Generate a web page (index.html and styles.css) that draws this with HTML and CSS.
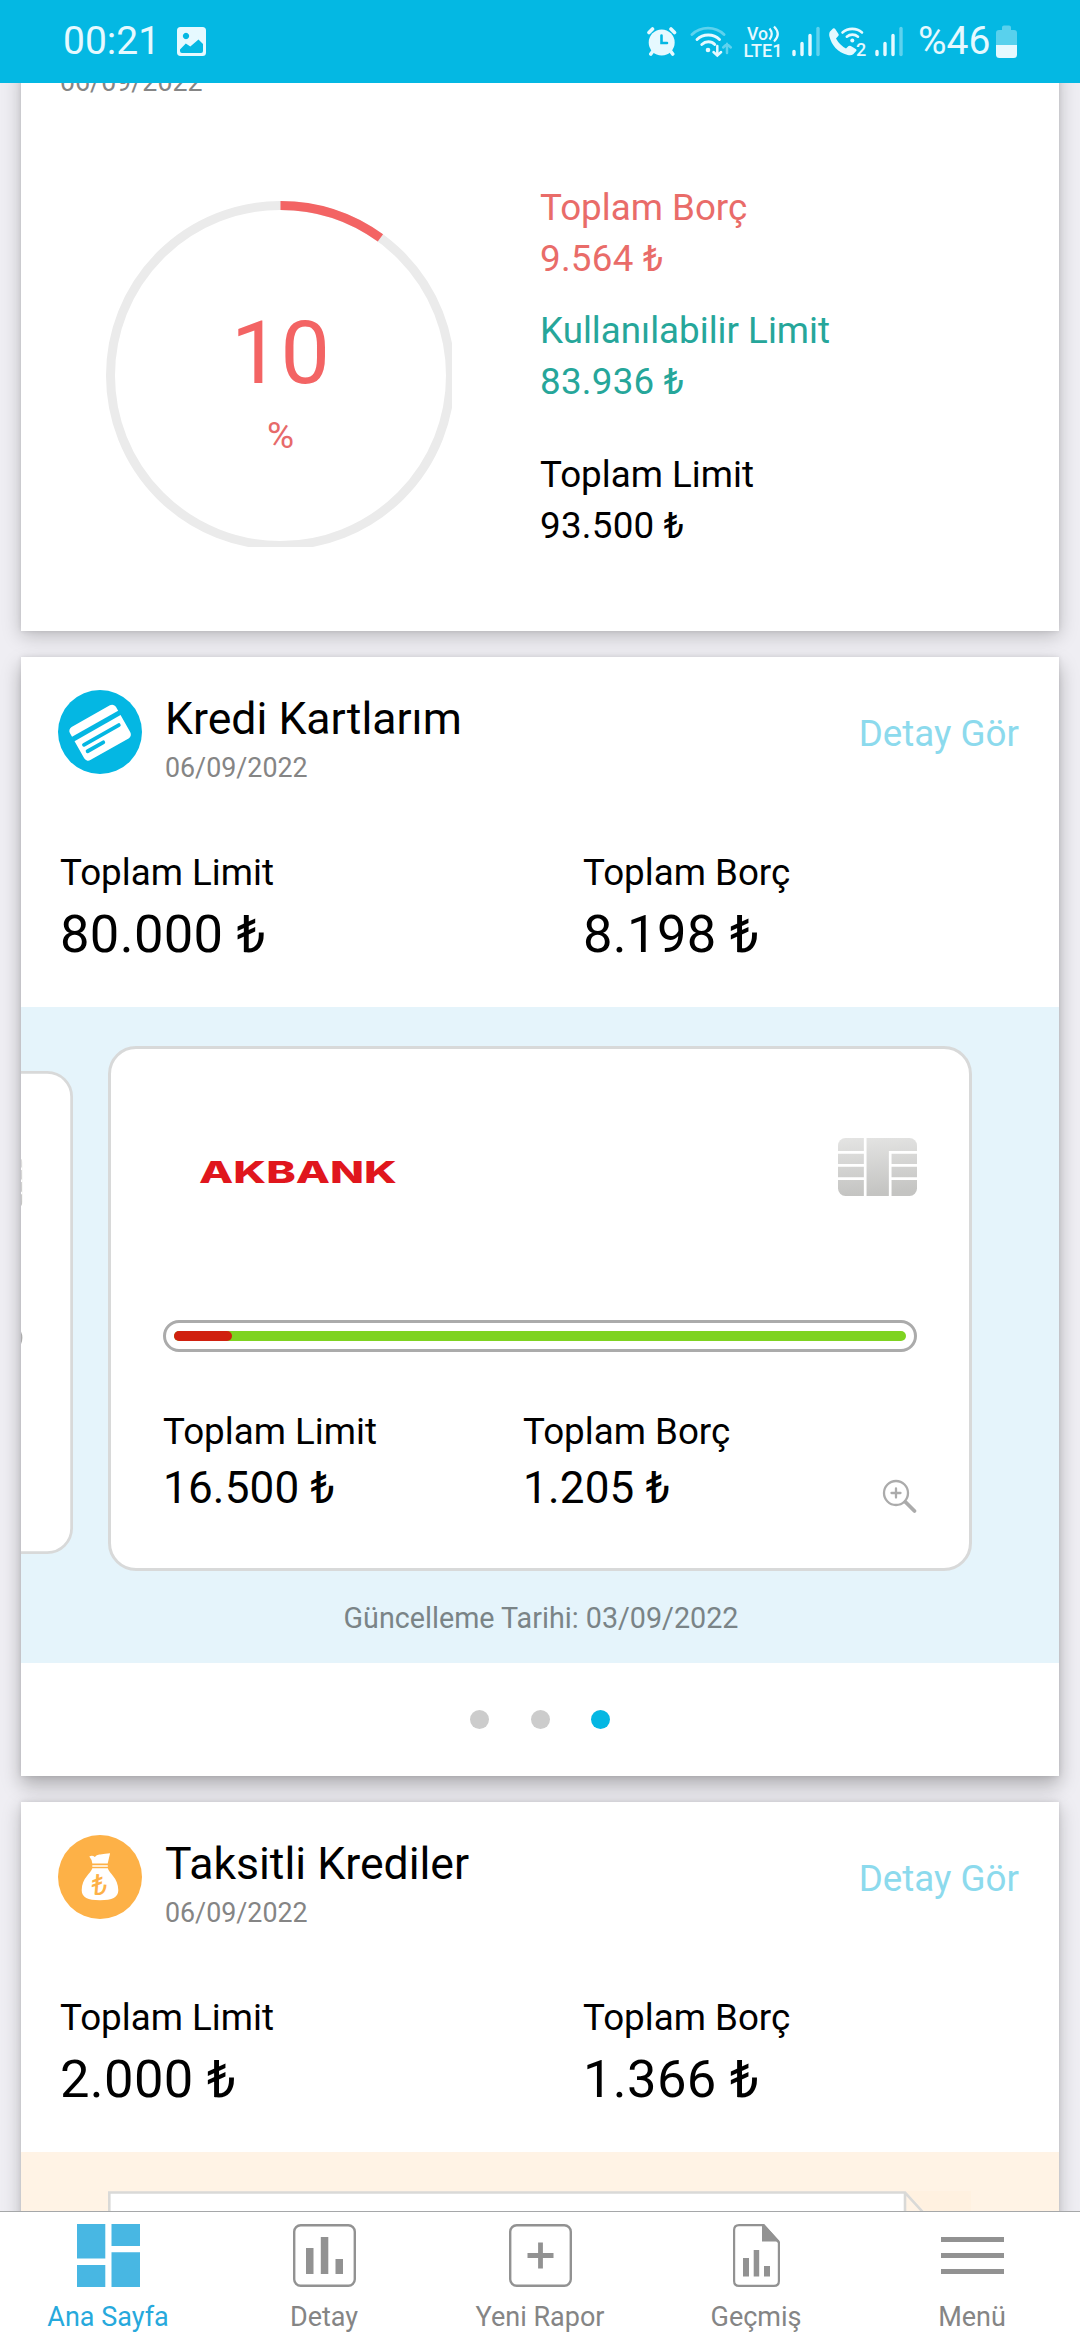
FILE: index.html
```html
<!DOCTYPE html>
<html lang="tr">
<head>
<meta charset="utf-8">
<title>Ana Sayfa</title>
<link rel="stylesheet" href="styles.css">
</head>
<body>
<header class="status">
  <span class="status-time">00:21</span>
  <svg class="status-photo" width="30" height="83" viewBox="0 0 30 83">
    <path fill="#e6f9ff" fill-rule="evenodd" d="M3.5 27h22A3.5 3.5 0 0 1 29 30.500v22A3.500 3.500 0 0 1 25.500 56h-22A3.500 3.500 0 0 1 0 52.500v-22A3.500 3.500 0 0 1 3.500 27zM9 32.800a3.200 3.200 0 1 0 .01 0zM3 49.500V51a2 2 0 0 0 2 2h19a2 2 0 0 0 2-2v-7l-4.500-4.500-8.200 7-4.500-3z"/>
  </svg>
  <div class="status-right">
    <svg width="30" height="83" viewBox="47 0 30 83" fill="none" stroke="#e6f9ff" stroke-linecap="round">
      <circle cx="61.700" cy="42.500" r="13" fill="#e6f9ff" stroke="none"/>
      <path stroke-width="3.600" d="M49 32.500l3.500-3.500M74.500 32.500L71 29M53 51l-2.200 3M70.500 51l2.200 3"/>
      <path stroke="#04b8e3" stroke-width="2.600" d="M61.500 35.500v7.500h5.500"/>
    </svg>
    <svg class="i-wifi" width="42" height="83" viewBox="90 0 42 83" fill="none" stroke="#e6f9ff" stroke-width="2.900" stroke-linecap="round">
      <path opacity=".4" d="M92 34.500c9-8.500 23-8.500 32 0"/>
      <path d="M97 39.500c6-6 16.500-6 22.500 0M101.800 44.500c3.800-3.600 9.500-3.600 13 0"/>
      <circle cx="108" cy="50" r="2.300" fill="#e6f9ff" stroke="none"/>
      <path stroke-width="2.500" d="M117.300 46v9M113.500 52l3.800 3.600 3.800-3.600"/>
      <path stroke-width="2.500" opacity=".4" d="M127 53v-9M123.200 47.500l3.800-3.600 3.800 3.600"/>
    </svg>
    <svg class="i-lte" width="40" height="83" viewBox="143 0 40 83" fill="#e6f9ff">
      <text class="lte-text" x="147" y="39.500" font-size="17.500" textLength="21" lengthAdjust="spacingAndGlyphs">Vo</text>
      <text class="lte-text" x="143.500" y="56.500" font-size="17.500" textLength="39" lengthAdjust="spacingAndGlyphs">LTE1</text>
      <path fill="none" stroke="#e6f9ff" stroke-width="2.200" d="M169.500 28.500q4.500 5.500 0 11M174 26.500q7.500 7.500 0 15"/>
    </svg>
    <svg class="i-sig" width="29" height="83" viewBox="192 0 29 83" stroke="#e6f9ff" stroke-width="3.400" stroke-linecap="round">
      <path d="M194 51.500v3M202 43.500v11M210 35.500v19"/><path opacity=".4" d="M218 28.500v26"/>
    </svg>
    <svg class="i-call" width="38" height="83" viewBox="229 0 38 83" fill="none" stroke="#e6f9ff">
      <path fill="#e6f9ff" stroke="none" d="M230 31.500l3-3q1.200-.8 2.200.4l3.300 5q.6 1.200-.3 2.200l-2.200 2.400q3.500 6.500 10 10l2.600-2.400q1-.8 2.200-.2l5 3q1.200 1 .4 2.200l-3 3.200q-2 1.400-5.500.6C237.500 52.500 231.500 45 229.300 36q-.4-3 .7-4.500z"/>
      <path stroke-width="2.600" stroke-linecap="round" d="M242.500 32.500c5.500-4.800 14-4.800 19.500 0M246.800 36.700c3.200-2.800 8-2.800 11.200 0"/>
      <circle cx="252.300" cy="40.500" r="2" fill="#e6f9ff" stroke="none"/>
      <text class="lte-text" x="256" y="55.500" font-size="18" fill="#e6f9ff" stroke="none">2</text>
    </svg>
    <svg class="i-sig2" width="29" height="83" viewBox="192 0 29 83" stroke="#e6f9ff" stroke-width="3.400" stroke-linecap="round">
      <path d="M194 51.500v3M202 43.500v11M210 35.500v19"/><path opacity=".4" d="M218 28.500v26"/>
    </svg>
    <span class="status-pct">%46</span>
    <svg class="i-bat" width="21" height="83" viewBox="396 0 21 83" fill="#e6f9ff">
      <path opacity=".38" d="M396 45V33q0-3 3-3h3v-2.500q0-2 2-2h5q2 0 2 2V30h3q3 0 3 3v12z"/>
      <path d="M396 45h21v9.500q0 3.500-3.500 3.500h-14q-3.500 0-3.500-3.500z"/>
    </svg>
  </div>
</header>

<main class="feed">
  <section class="card overview">
    <div class="date">06/09/2022</div>
    <div class="overview-row">
      <div class="ring">
        <svg class="ring-svg" width="346" height="346" viewBox="0 0 346 346" fill="none" stroke-width="9">
          <circle cx="174.500" cy="174.500" r="170" stroke="#ebebeb"/>
          <path stroke="#f36464" d="M174.500 4.500A170 170 0 0 1 274.420 36.970"/>
        </svg>
        <div class="ring-text"><span class="ring-num">10</span><span class="ring-pct">%</span></div>
      </div>
      <div class="legend">
        <div class="legend-item debt">Toplam Borç<br><span class="sum">9.564 ₺</span></div>
        <div class="legend-item avail">Kullanılabilir Limit<br><span class="sum">83.936 ₺</span></div>
        <div class="legend-item limit">Toplam Limit<br><span class="sum">93.500 ₺</span></div>
      </div>
    </div>
  </section>

  <section class="card card-raised">
    <div class="card-head">
      <svg width="84" height="84" viewBox="0 0 84 84">
        <circle cx="42" cy="42" r="42" fill="#04b7e3"/>
        <g transform="translate(42 42.500) rotate(-29.500)">
          <rect x="-26.500" y="-18.800" width="53" height="38" rx="4.500" fill="#fff"/>
          <path stroke="#04b7e3" stroke-width="5" d="M-28-7.500h56"/>
          <path stroke="#04b7e3" stroke-width="3.800" stroke-linecap="round" d="M-20 2.800h40M-20 10.200h18"/>
        </g>
      </svg>
      <div class="card-name"><div class="title">Kredi Kartlarım</div><div class="date">06/09/2022</div></div>
      <a class="more">Detay Gör</a>
    </div>
    <div class="totals">
      <div><div class="label">Toplam Limit</div><div class="amount">80.000 ₺</div></div>
      <div><div class="label">Toplam Borç</div><div class="amount">8.198 ₺</div></div>
    </div>
    <div class="band">
      <div class="slides">
        <div class="slide slide-prev">
          <div class="slide-top">
            <svg class="chip" width="79" height="58" viewBox="0 0 79 58"><use href="#chip"/></svg>
          </div>
          <div class="meter"><div class="meter-track"></div></div>
        </div>
        <div class="slide">
          <div class="slide-top">
            <svg class="bank" width="199" height="26" viewBox="0 0 199 26">
              <text class="bank-text" x="0" y="24" textLength="198" lengthAdjust="spacingAndGlyphs">AKBANK</text>
            </svg>
            <svg class="chip" width="79" height="58" viewBox="0 0 79 58">
              <defs><linearGradient id="silver" x1="0" y1="0" x2=".1" y2="1"><stop offset="0" stop-color="#e4e4e3"/><stop offset="1" stop-color="#c4c4c2"/></linearGradient></defs>
              <g id="chip">
                <rect width="79" height="58" rx="7.500" fill="url(#silver)"/>
                <path fill="none" stroke="#fff" stroke-width="2.700" d="M27.200 0v58M0 14.300h27M0 27.400h27M0 40.600h27M52.200 58V14.300H79M52 27.400h27M52 40.600h27"/>
              </g>
            </svg>
          </div>
          <div class="meter"><div class="meter-track"><div class="meter-used" style="width:7.9%"></div></div></div>
          <div class="slide-totals">
            <div><div class="label">Toplam Limit</div><div class="value">16.500 ₺</div></div>
            <div><div class="label">Toplam Borç</div><div class="value">1.205 ₺</div></div>
            <svg class="zoom" width="36" height="36" viewBox="0 0 36 36" fill="none" stroke="#ababab" stroke-linecap="round">
              <circle cx="14" cy="14" r="12" stroke-width="2.300"/>
              <path stroke-width="2.300" d="M9.500 14h9M14 9.500v9"/>
              <path stroke-width="3.800" d="M23.500 23l9 9"/>
            </svg>
          </div>
        </div>
      </div>
      <div class="updated">Güncelleme Tarihi: 03/09/2022</div>
    </div>
    <div class="dots"><i class="dot"></i><i class="dot"></i><i class="dot on"></i></div>
  </section>

  <section class="card">
    <div class="card-head">
      <svg width="84" height="84" viewBox="0 0 84 84">
        <circle cx="42" cy="42" r="42" fill="#fdb147"/>
        <path fill="#fff" d="M31.300 21.500q3-1.500 5.500.5 2-3 5.500-2.500 5-1 9.800-1.300-1.200 5-2.400 10.300H34.300q0-3.500-3-7zM34.300 33.300h15.500c1 5 10.500 9.500 10.500 22 0 7-6 10-18.300 10s-18.300-3-18.300-10c0-12.500 9.600-17 10.600-22zM34.300 30.300h15.500v1.400H34.300z"/>
        <text class="lira" x="33.500" y="60" transform="rotate(5 42 50)">₺</text>
      </svg>
      <div class="card-name"><div class="title">Taksitli Krediler</div><div class="date">06/09/2022</div></div>
      <a class="more">Detay Gör</a>
    </div>
    <div class="totals">
      <div><div class="label">Toplam Limit</div><div class="amount">2.000 ₺</div></div>
      <div><div class="label">Toplam Borç</div><div class="amount">1.366 ₺</div></div>
    </div>
    <div class="band band-loan">
      <svg class="paper" width="863" height="120" viewBox="0 0 863 120">
        <path fill="#fff1e0" d="M797 0h66v66z"/>
        <path fill="#fff" stroke="#d9d9d7" stroke-width="2.600" d="M1.300 140V1.500H797L863 74v70M797 1.500V75h66"/>
      </svg>
    </div>
  </section>
</main>

<nav class="tabs">
  <a class="tab active">
    <svg width="63" height="63" viewBox="0 0 63 63" fill="#48b7e3"><path d="M0 0h28.300v34.500H0zM34.500 0H63v22H34.500zM0 41h28.300v22H0zM34.500 28.300H63V63H34.500z"/></svg>
    <span>Ana Sayfa</span>
  </a>
  <a class="tab">
    <svg width="63" height="63" viewBox="0 0 63 63" fill="#929292"><rect x="1.200" y="1.200" width="60.600" height="60.600" rx="6.500" fill="none" stroke="#929292" stroke-width="2.400"/><path d="M13 24h7.500v26H13zM27.800 13h7.500v37h-7.500zM42.500 35H50v15h-7.500z"/></svg>
    <span>Detay</span>
  </a>
  <a class="tab">
    <svg width="63" height="63" viewBox="0 0 63 63" fill="none" stroke="#929292"><rect x="1.200" y="1.200" width="60.600" height="60.600" rx="6.500" stroke-width="2.400"/><path stroke-width="4.800" d="M18.500 31.500h26M31.500 18.500v26"/></svg>
    <span>Yeni Rapor</span>
  </a>
  <a class="tab">
    <svg width="63" height="63" viewBox="0 0 63 63" fill="#929292"><path fill="none" stroke="#929292" stroke-width="2.200" d="M14 1.100h24.500L53.900 18.500V57q0 4.900-4.900 4.900H14q-4.900 0-4.900-4.900V6q0-4.900 4.900-4.900z"/><path d="M37 0h2l16 17.500H37zM18 34h6v18.500h-6zM28.700 26h5.500v26.500h-5.500zM39 42h6v10.500h-6z"/></svg>
    <span>Geçmiş</span>
  </a>
  <a class="tab">
    <svg width="63" height="63" viewBox="0 0 63 63" stroke="#929292" stroke-width="5"><path d="M0 15.500h63M0 31.500h63M0 47.500h63"/></svg>
    <span>Menü</span>
  </a>
</nav>
</body>
</html>
```
FILE: styles.css
```css
* { box-sizing: border-box; }
body {
  margin: 0;
  width: 1080px;
  height: 2340px;
  display: flex;
  flex-direction: column;
  overflow: hidden;
  background: #efeef3;
  color: #000;
  font-family: Roboto, "Liberation Sans", sans-serif;
}
svg { display: block; flex: none; }

/* Status bar */
.status {
  flex: none;
  height: 83px;
  padding: 0 63px;
  display: flex;
  align-items: center;
  background: #04b8e3;
  color: #e6f9ff;
}
.status-time { flex: none; width: 114px; font-size: 39px; line-height: 83px; }
.status-right { flex: none; display: flex; margin-left: 440px; align-items: center; }
.lte-text { font-family: Roboto, sans-serif; font-weight: 500; }
.i-wifi { margin-left: 13px; }
.i-lte { margin-left: 11px; }
.i-sig { margin-left: 9px; }
.i-call { margin-left: 8px; }
.i-sig2 { margin-left: 8px; }
.status-pct { flex: none; width: 78px; margin-left: 14px; font-size: 39px; line-height: 83px; }

/* Scrolling feed */
.feed {
  flex: 1;
  min-height: 0;
  overflow: hidden;
  padding: 0 21px;
  display: flex;
  flex-direction: column;
  gap: 26px;
}
.card {
  flex: none;
  background: #fff;
  padding-top: 33px;
  box-shadow: 0 5px 18px rgba(0, 0, 0, .22), 0 0 5px rgba(0, 0, 0, .1);
}
.card-raised { box-shadow: 0 9px 18px rgba(0, 0, 0, .28), 0 0 5px rgba(0, 0, 0, .1); }
.overview { margin-top: -17px; padding: 0 39px 80px; }
.date { font-size: 26.8px; line-height: 32px; color: #858585; }
.overview-row { display: flex; margin-top: 84px; }
.ring {
  display: grid;
  width: 346px;
  height: 346px;
  margin: 19px 88px 0 46px;
}
.ring-svg, .ring-text { grid-area: 1 / 1; }
.ring-text {
  display: flex;
  flex-direction: column;
  align-items: center;
  width: 349px;
  padding-top: 100px;
  color: #f36464;
}
.ring-num { font-size: 88px; line-height: 103px; }
.ring-pct { margin-top: 10px; font-size: 37px; line-height: 43px; color: #e76a6a; }
.legend { font-size: 36.75px; line-height: 51px; }
.sum { letter-spacing: .25px; }
.avail { margin-top: 21px; color: #26a69a; }
.debt { color: #e96c69; }
.limit { margin-top: 42px; }

/* Product card */
.card-head { display: flex; height: 84px; padding: 0 40px 0 37px; }
.card-name { flex: 1; margin: 3px 0 0 23px; }
.title { font-size: 44.6px; line-height: 53px; margin-bottom: 6px; }
.more { margin-top: 22px; font-size: 36.75px; line-height: 43px; color: #8cdaed; }
.totals {
  display: grid;
  grid-template-columns: 523px 1fr;
  padding: 77px 0 42px 39px;
}
.label { font-size: 36.75px; line-height: 43px; }
.amount { margin-top: 9px; font-size: 52.5px; line-height: 62px; letter-spacing: .35px; }

.band { height: 656px; padding-top: 39px; background: #e5f4fb; overflow: hidden; }
.slides { display: flex; gap: 35px; margin-left: -811px; }
.slide {
  flex: none;
  width: 864px;
  height: 525px;
  padding: 89px 52px 0;
  background: #fff;
  border: 3px solid #d8d9d9;
  border-radius: 28px;
}
.slide-prev { width: 863px; transform: translateY(4px) scale(.92); transform-origin: right center; }
.slide-top { display: flex; height: 58px; }
.bank { margin: 21px 0 0 36px; }
.bank-text { font-family: Inter, "Liberation Sans", sans-serif; font-weight: 800; font-size: 30.5px; fill: #e0161d; }
.chip { margin-left: auto; }
.meter {
  height: 32px;
  margin-top: 124px;
  padding: 8px;
  border: 3px solid #ababab;
  border-radius: 16px;
}
.meter-track { height: 10px; border-radius: 5px; background: #7ed321; }
.meter-used { height: 10px; border-radius: 5px; background: #d0200f; }
.slide-totals {
  display: grid;
  grid-template-columns: 360px 359px 36px;
  margin-top: 58px;
}
.value { margin-top: 9px; font-size: 44px; line-height: 52px; letter-spacing: .2px; }
.zoom { margin-top: 69px; }
.updated { margin-top: 30px; padding-left: 2px; font-size: 28.7px; line-height: 34px; text-align: center; color: #7a8487; }
.dots { display: flex; justify-content: center; align-items: center; gap: 41.5px; height: 113px; }
.dot { width: 19px; height: 19px; border-radius: 50%; background: #ccc; }
.dot.on { background: #04b7e3; }
.band-loan { background: #fff3e5; }
.paper { margin-left: 87px; }

/* Bottom tabs */
.tabs {
  flex: none;
  height: 129px;
  display: grid;
  grid-template-columns: repeat(5, 1fr);
  background: #fff;
  border-top: 1px solid #a5a7a9;
}
.tab {
  display: flex;
  flex-direction: column;
  align-items: center;
  padding-top: 12px;
  font-size: 27px;
  line-height: 32px;
  color: #858585;
}
.tab span { margin-top: 14px; }
.tab.active { color: #27a9dc; }
.lira { font-family: Roboto, sans-serif; font-size: 29px; fill: #fdb147; }
```
